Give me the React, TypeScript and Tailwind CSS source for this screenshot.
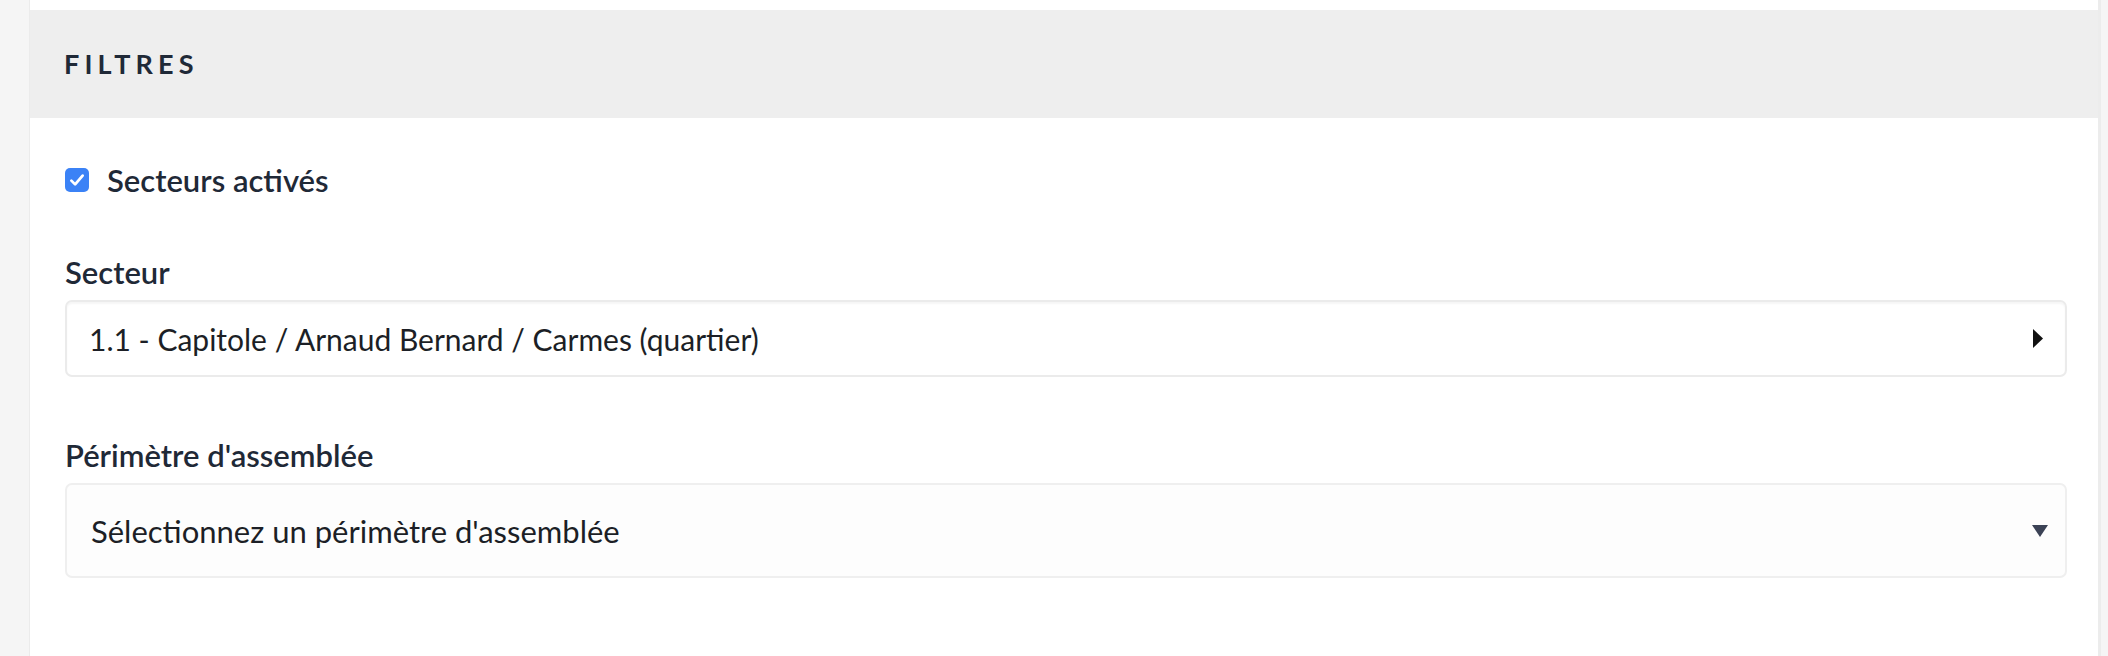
export default function App() {
  return (
    <div className="flex h-[656px] w-[2108px] overflow-hidden bg-[#f5f5f5]" style={{ fontFamily: "Lato, 'Noto Sans', sans-serif" }}>
      <div className="w-[30px] shrink-0 border-r border-[#ebebeb]" />
      <div className="flex w-[2068px] shrink-0 flex-col bg-white">
        <div className="h-[10px]" />
        <div className="flex h-[108px] items-center bg-[#eeeeee] pl-[34px]">
          <span className="text-[27px] font-bold uppercase tracking-[0.19em] text-[#1f2937]">Filtres</span>
        </div>
        <div className="flex flex-col pl-[35px] pr-[31px]">
          <label className="mt-[42px] flex h-[40px] items-center gap-[18px]">
            <span className="flex h-[24px] w-[24px] items-center justify-center rounded-[5px] bg-[#3b82f6]">
              <svg viewBox="0 0 16 16" className="h-[20px] w-[20px]" fill="none" stroke="white" strokeWidth="2.2" strokeLinecap="round" strokeLinejoin="round">
                <path d="M3.5 8.5l3 3 6-7" />
              </svg>
            </span>
            <span className="text-[31px] font-semibold leading-[40px] text-[#1f2937]">Secteurs activés</span>
          </label>

          <div className="mt-[52px] text-[31px] font-semibold leading-[40px] text-[#1f2937]">Secteur</div>
          <div className="mt-[8px] flex h-[77px] items-center justify-between rounded-[7px] border-2 border-[#ebebeb] bg-white pl-[22px] pr-[22px] shadow-[inset_0_2px_2px_rgba(0,0,0,0.04)]">
            <span className="text-[30px] leading-[40px] text-[#1c1f26]">1.1 - Capitole / Arnaud Bernard / Carmes (quartier)</span>
            <svg viewBox="0 0 10 19" className="h-[19px] w-[10px]"><path d="M0 0L10 9.5L0 19Z" fill="#111111" /></svg>
          </div>

          <div className="mt-[58px] text-[31px] font-semibold leading-[40px] text-[#1f2937]">Périmètre d'assemblée</div>
          <div className="mt-[8px] flex h-[95px] items-center justify-between rounded-[7px] border-2 border-[#efefef] bg-[#fdfdfd] pl-[24px] pr-[17px]">
            <span className="text-[31px] leading-[40px] text-[#1c1f26]">Sélectionnez un périmètre d'assemblée</span>
            <svg viewBox="0 0 16 12" className="h-[12px] w-[16px]"><path d="M0 0H16L8 12Z" fill="#3b4255" /></svg>
          </div>
        </div>
      </div>
      <div className="flex-1 border-l-[3px] border-[#ececec] bg-[#f5f5f5]" />
    </div>
  )
}
